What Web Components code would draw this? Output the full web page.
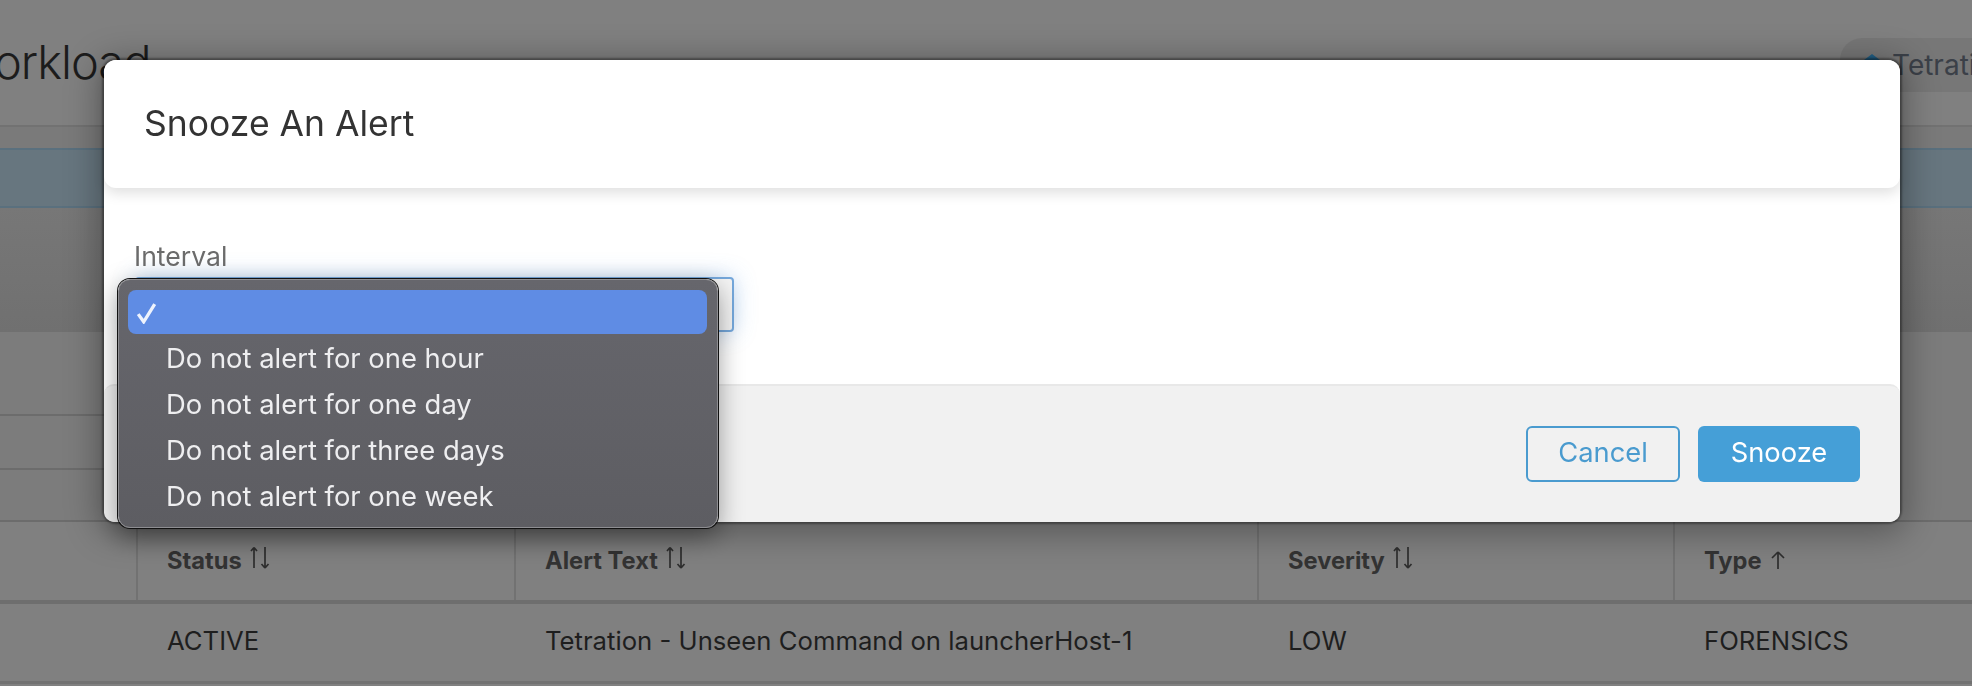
<!DOCTYPE html>
<html>
<head>
<meta charset="utf-8">
<title>Snooze An Alert</title>
<style>
  html, body { margin: 0; height: 100%; overflow: hidden; background: #808080; }
  body { font-family: "Inter", "Liberation Sans", sans-serif; }
</style>
</head>
<body>

<alert-page>
  <span slot="title">orkload</span>
  <scope-pill slot="scope">Tetration</scope-pill>
  <alert-table></alert-table>
</alert-page>

<snooze-modal>
  <span slot="title">Snooze An Alert</span>
  <option-menu slot="menu">
    <menu-item selected></menu-item>
    <menu-item>Do not alert for one hour</menu-item>
    <menu-item>Do not alert for one day</menu-item>
    <menu-item>Do not alert for three days</menu-item>
    <menu-item>Do not alert for one week</menu-item>
  </option-menu>
</snooze-modal>

<script>
// page behind the overlay, already dimmed so colours are flat greys
class AlertPage extends HTMLElement {
    constructor() {
        super();
        this.attachShadow({ mode: 'open' });
        this.shadowRoot.innerHTML = `
    <style>
      :host { display: block; width: 1972px; height: 686px; overflow: hidden; background: #808080; color: #1c1c1c; }
      .top { display: flex; align-items: flex-start; height: 125px; border-bottom: 2px solid #727272; }
      .title { font-size: 47px; font-weight: 300; line-height: 56px; margin: 34px 0 0 -6px; letter-spacing: -1px; }
      .scope { margin: 38px -68px 0 auto; }
      .gap { height: 21px; background: #7a7a7a; }
      .banner { height: 56px; background: #67767f; border-top: 2px solid #5a707e; border-bottom: 2px solid #5a707e; }
      .filters { height: 124px; background: linear-gradient(#777, #707070); }
      .lines { display: flow-root; height: 189px; background: #7c7c7c; }
      .lines div { width: 110px; height: 2px; background: #6c6c6c; }
      .lines div:nth-child(1) { margin-top: 82px; }
      .lines div:nth-child(2) { margin-top: 52px; }
      .lines div:nth-child(3) { margin-top: 50px; width: 100%; }
    </style>
    <div class="top">
      <div class="title"><slot name="title"></slot></div>
      <div class="scope"><slot name="scope"></slot></div>
    </div>
    <div class="gap"></div>
    <div class="banner"></div>
    <div class="filters"></div>
    <div class="lines"><div></div><div></div><div></div></div>
    <slot></slot>
  `;
    }
}

class ScopePill extends HTMLElement {
    constructor() {
        super();
        this.attachShadow({ mode: 'open' });
        this.shadowRoot.innerHTML = `
    <style>
      :host { display: flex; align-items: center; gap: 8px; width: 200px; height: 54px; box-sizing: border-box; padding-left: 20px; border-radius: 22px; background: #777; color: #3b4048; font-size: 28px; white-space: nowrap; }
      svg { flex: none; width: 24px; height: 24px; }
    </style>
    <svg viewBox="0 0 24 24"><path d="M12 1 24 10 12 24 0 10z" fill="#205f86"/></svg>
    <slot></slot>
  `;
    }
}

class SortHead extends HTMLElement {
    constructor() {
        super();
        this.attachShadow({ mode: 'open' });
        const both = '<path d="M4 22V1.5M4 1.5 1 5M4 1.5 7 5M15 1v21M15 22l-3.5-4M15 22l3.5-4" />';
        const asc = '<path d="M8 19V2M8 2 2 8M8 2l6 6" />';
        const isAsc = this.hasAttribute('asc');
        this.shadowRoot.innerHTML = `
    <style>
      :host { display: flex; align-items: center; gap: 8px; height: 100%; box-sizing: border-box; padding-left: 29px; border-left: 2px solid #727272; font-size: 23.7px; font-weight: 700; color: #333; }
      svg { width: 20px; height: 24px; margin-top: ${isAsc ? '2' : '-6'}px; fill: none; stroke: #2e2e2e; stroke-width: 1.7; }
    </style>
    <slot></slot>
    <svg viewBox="0 0 20 24">${isAsc ? asc : both}</svg>
  `;
    }
}

class AlertTable extends HTMLElement {
    constructor() {
        super();
        this.attachShadow({ mode: 'open' });
        this.shadowRoot.innerHTML = `
    <style>
      :host { display: grid; grid-template-columns: 136px 378px 743px 416px 299px; grid-template-rows: 79px 81px 3px; color: #1e1e1e; font-size: 25.7px; }
      .cell { display: flex; align-items: center; padding: 0 0 4px 31px; border-top: 4px solid #6e6e6e; }
      .foot { grid-column: 1 / -1; background: #727272; }
    </style>
    <div></div>
    <sort-head>Status</sort-head>
    <sort-head>Alert Text</sort-head>
    <sort-head>Severity</sort-head>
    <sort-head asc>Type</sort-head>
    <div class="cell"></div>
    <div class="cell">ACTIVE</div>
    <div class="cell">Tetration - Unseen Command on launcherHost-1</div>
    <div class="cell">LOW</div>
    <div class="cell">FORENSICS</div>
    <div class="foot"></div>
  `;
    }
}

class SnoozeModal extends HTMLElement {
    constructor() {
        super();
        this.attachShadow({ mode: 'open' });
        this.shadowRoot.innerHTML = `
    <style>
      :host { position: fixed; left: 104px; top: 60px; width: 1796px; height: 462px; display: flex; flex-direction: column; background: #fff; border-radius: 12px; box-shadow: 0 0 2px 2px rgba(0,0,0,.35), 0 6px 34px 6px rgba(0,0,0,.3); color: #333; }
      header { flex: none; height: 128px; display: flex; align-items: center; padding: 0 0 2px 40px; box-sizing: border-box; font-size: 35.5px; border-radius: 12px; background: #fff; box-shadow: 0 5px 14px rgba(0,0,0,.13); }
      .body { flex: 1; padding: 50px 0 0 31px; }
      label { display: block; height: 36px; line-height: 36px; margin-left: -1px; font-size: 26.6px; color: #6b6b6b; }
      .select { width: 599px; height: 55px; margin-top: 3px; box-sizing: border-box; border: 2px solid #75a8dc; border-radius: 4px; background: #f4f4f4; box-shadow: 0 0 22px rgba(80,150,225,.35); }
      footer { flex: none; height: 138px; display: flex; justify-content: flex-end; align-items: center; gap: 18px; box-sizing: border-box; padding: 0 40px 0 0; background: #f1f1f1; border-top: 2px solid #e8e8e8; border-radius: 10px; }
      ::slotted(option-menu) { position: absolute; left: 14px; top: 219px; }
      button { height: 56px; box-sizing: border-box; padding: 0 0 3px; border-radius: 6px; font: 27.3px "Inter", "Liberation Sans", sans-serif; }
      .cancel { width: 154px; background: transparent; color: #4a9bcf; border: 2px solid #4a9bcf; }
      .snooze { width: 162px; background: #459fd7; color: #fff; border: 0; }
    </style>
    <header><slot name="title"></slot></header>
    <div class="body">
      <label>Interval</label>
      <div class="select"></div>
    </div>
    <footer>
      <button class="cancel">Cancel</button>
      <button class="snooze">Snooze</button>
    </footer>
    <slot name="menu"></slot>
  `;
    }
}

// native looking popup of the select
class OptionMenu extends HTMLElement {
    constructor() {
        super();
        this.attachShadow({ mode: 'open' });
        this.shadowRoot.innerHTML = `
    <style>
      :host { display: block; width: 600px; height: 249px; box-sizing: border-box; padding: 10px 10px 10px 9px; border-radius: 12px; border: 1px solid #8e8e92; background: linear-gradient(#66666c, #5d5d62); box-shadow: 0 0 0 1px #111, 0 8px 26px rgba(0,0,0,.4); }
    </style>
    <slot></slot>
  `;
    }
}

class MenuItem extends HTMLElement {
    constructor() {
        super();
        this.attachShadow({ mode: 'open' });
        const check = this.hasAttribute('selected')
            ? '<svg viewBox="0 0 20 20"><path d="M2 11 7 18 17 2" fill="none" stroke="#eef3fd" stroke-width="3"/></svg>'
            : '';
        this.shadowRoot.innerHTML = `
    <style>
      :host { display: flex; align-items: center; height: 46px; padding-left: 38px; color: #eeeef0; font-size: 27.4px; white-space: nowrap; position: relative; }
      :host([selected]) { height: 44px; margin-bottom: 1px; background: #5f8ce4; border-radius: 8px; }
      svg { position: absolute; left: 8px; top: 12px; width: 22px; height: 22px; }
    </style>
    ${check}
    <slot></slot>
  `;
    }
}

customElements.define('scope-pill', ScopePill);
customElements.define('sort-head', SortHead);
customElements.define('alert-table', AlertTable);
customElements.define('alert-page', AlertPage);
customElements.define('menu-item', MenuItem);
customElements.define('option-menu', OptionMenu);
customElements.define('snooze-modal', SnoozeModal);
</script>
</body>
</html>
